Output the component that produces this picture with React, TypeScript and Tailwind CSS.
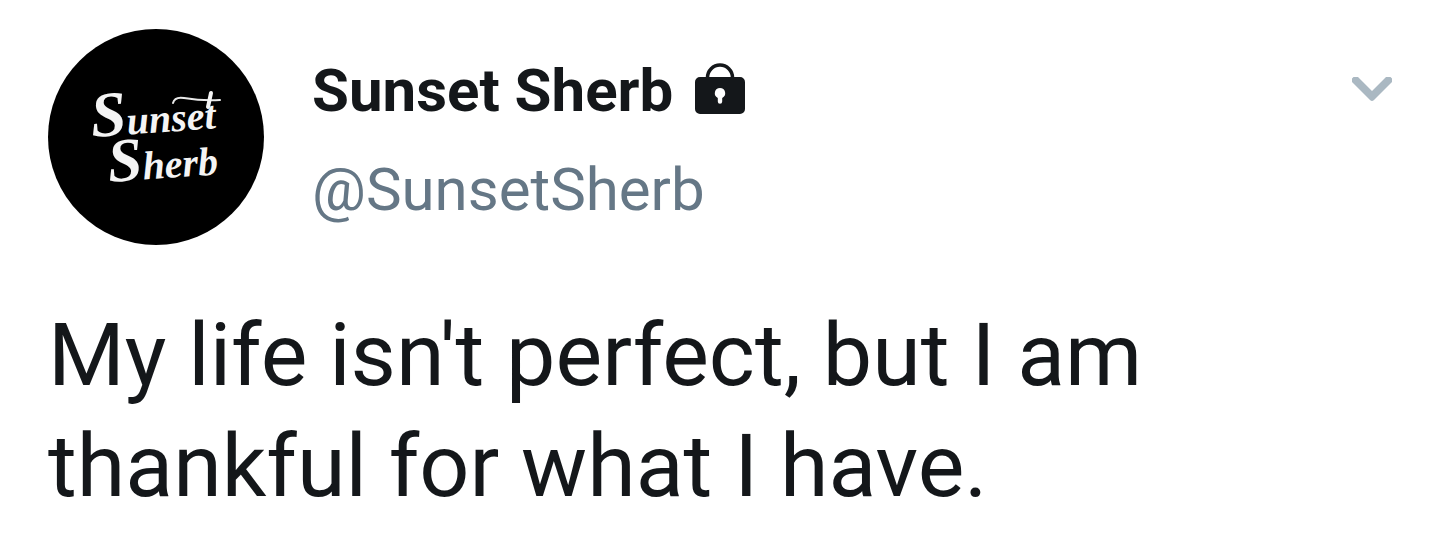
import React from 'react'

interface Tweet {
  name: string
  handle: string
  text: string
}

const tweet: Tweet = {
  name: 'Sunset Sherb',
  handle: '@SunsetSherb',
  text: "My life isn't perfect, but I am thankful for what I have.",
}

function Avatar() {
  return (
    <svg viewBox="0 0 216 216" className="size-[216px] shrink-0" role="img" aria-label="Sunset Sherb">
      <circle cx="108" cy="108" r="108" fill="#000" />
      <g
        fill="#f4f4f4"
        fontFamily="'Liberation Serif', serif"
        fontStyle="italic"
        fontWeight="700"
        fontSize="40"
      >
        <text x="44" y="108" transform="rotate(-4 44 108)">
          <tspan fontSize="64">S</tspan>unset
        </text>
        <text x="61" y="153" transform="rotate(-4 61 153)">
          <tspan fontSize="62">S</tspan>herb
        </text>
      </g>
      {/* Swash over the last t */}
      <path
        d="M125 74c1-4 5-6 11-5 12 2 23 3 36 2"
        fill="none"
        stroke="#e8e8e8"
        strokeWidth="2"
        strokeLinecap="round"
      />
      <path d="M163 64l-3 14" fill="none" stroke="#f4f4f4" strokeWidth="4" strokeLinecap="round" />
    </svg>
  )
}

function LockIcon() {
  return (
    <svg viewBox="0 0 50 56" className="h-14 w-[50px] shrink-0" role="img" aria-label="Protected account">
      <path d="M12.500 17v-2.500a12.500 12.500 0 0 1 25 0V17" fill="none" stroke="#14171a" strokeWidth="3.500" />
      <path
        d="M5 14h40a5 5 0 0 1 5 5v27a5 5 0 0 1-5 5H5a5 5 0 0 1-5-5V19a5 5 0 0 1 5-5Zm20 11a5.200 5.200 0 0 0-2.200 9.900V38.500a2.200 2.200 0 0 0 4.400 0V34.900A5.200 5.200 0 0 0 25 25Z"
        fill="#14171a"
        fillRule="evenodd"
      />
    </svg>
  )
}

function ChevronIcon() {
  return (
    <svg viewBox="0 0 40 28" className="h-7 w-10" aria-hidden="true">
      <path d="M1.500 0H6L20 14 34 0h4.500L40 1.500V5L22 23q-2 2-4 0L0 5V1.500Z" fill="#aab8c2" />
    </svg>
  )
}

export default function App() {
  return (
    <article className="min-h-screen bg-white px-12 pt-[29px] pb-5 font-['Roboto',sans-serif] text-[#14171a]">
      <header className="flex items-start gap-12">
        <Avatar />
        <div className="flex min-w-0 flex-1 flex-col gap-7 pt-[26px] text-[60px] leading-[71px]">
          <div className="flex items-center justify-between">
            <div className="flex items-center gap-[22px]">
              <h1 className="font-bold">{tweet.name}</h1>
              <LockIcon />
            </div>
            <button type="button" aria-label="More options">
              <ChevronIcon />
            </button>
          </div>
          <a href="#profile" className="self-start text-[#657786]">
            {tweet.handle}
          </a>
        </div>
      </header>
      <p className="mt-[54px] text-[88px] leading-[111px]">{tweet.text}</p>
    </article>
  )
}
